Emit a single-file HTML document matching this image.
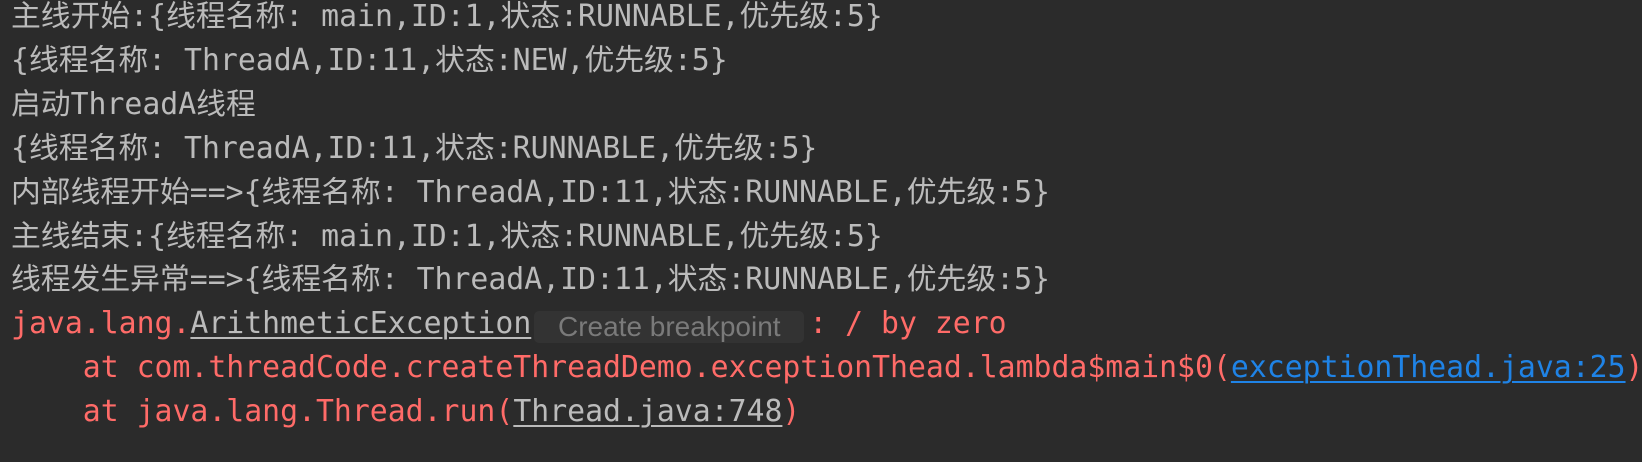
<!DOCTYPE html>
<html><head><meta charset="utf-8"><style>
html,body{margin:0;padding:0;background:#2b2b2b;width:1642px;height:462px;overflow:hidden}
.c{position:absolute;left:11px;top:-5px;font-family:"DejaVu Sans Mono","Liberation Mono","Noto Sans CJK SC",monospace;font-size:29.8px;line-height:43.9px;color:#bbbbbb;white-space:pre}
.r{color:#ff6b68}
.u{text-decoration:underline;text-decoration-thickness:2px;text-underline-offset:4px}
.g{color:#bbbbbb}
.b{color:#1f83e6}
.tip{display:inline-block;width:270px;height:32px;line-height:32px;vertical-align:-3px;background:#333333;border-radius:5px;color:#7a7a7a;font-family:"Liberation Sans","DejaVu Sans",sans-serif;font-size:28px;text-align:center;margin:0 5px 0 3px}
</style></head><body><div class="c">主线开始:{线程名称: main,ID:1,状态:RUNNABLE,优先级:5}
{线程名称: ThreadA,ID:11,状态:NEW,优先级:5}
启动ThreadA线程
{线程名称: ThreadA,ID:11,状态:RUNNABLE,优先级:5}
内部线程开始==>{线程名称: ThreadA,ID:11,状态:RUNNABLE,优先级:5}
主线结束:{线程名称: main,ID:1,状态:RUNNABLE,优先级:5}
线程发生异常==>{线程名称: ThreadA,ID:11,状态:RUNNABLE,优先级:5}
<span class="r">java.lang.<span class="u g">ArithmeticException</span><span class="tip">Create breakpoint</span>: / by zero</span>
<span class="r">    at com.threadCode.createThreadDemo.exceptionThead.lambda$main$0(<span class="u b">exceptionThead.java:25</span>)</span>
<span class="r">    at java.lang.Thread.run(<span class="u g">Thread.java:748</span>)</span></div></body></html>
